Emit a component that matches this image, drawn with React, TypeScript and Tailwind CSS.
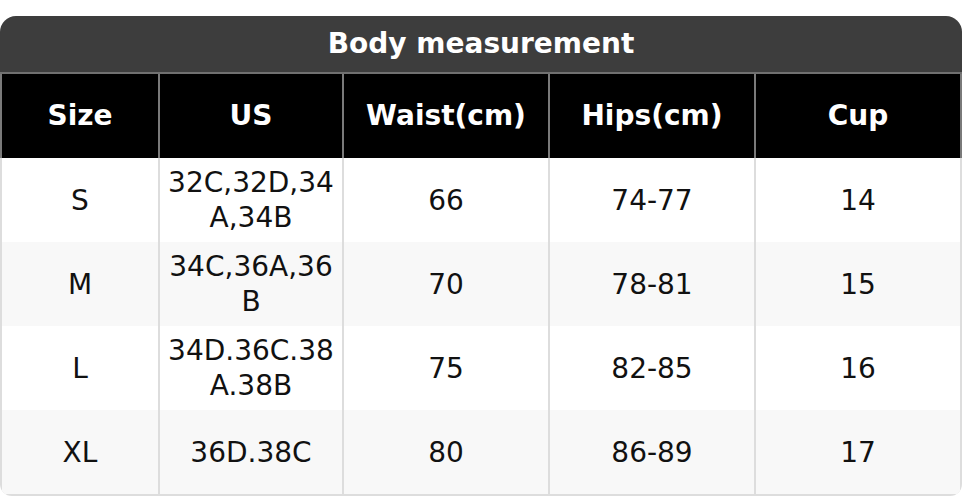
import React from "react";

type Row = { size: string; us: string; waist: string; hips: string; cup: string };

const rows: Row[] = [
  { size: "S", us: "32C,32D,34A,34B", waist: "66", hips: "74-77", cup: "14" },
  { size: "M", us: "34C,36A,36B", waist: "70", hips: "78-81", cup: "15" },
  { size: "L", us: "34D.36C.38A.38B", waist: "75", hips: "82-85", cup: "16" },
  { size: "XL", us: "36D.38C", waist: "80", hips: "86-89", cup: "17" },
];

const headers = ["Size", "US", "Waist(cm)", "Hips(cm)", "Cup"];

function App() {
  return (
    <div className="w-[962px] h-[496px] bg-white pt-4 font-['DejaVu_Sans',sans-serif]">
      {/* title bar */}
      <div className="h-[58px] rounded-t-[16px] bg-[#3d3d3d] border-b-2 border-[#707070] flex items-center justify-center text-[28px] font-bold text-white">
        Body measurement
      </div>

      {/* header row */}
      <div className="grid grid-cols-[156px_182px_204px_204px_204px] gap-x-[2px] px-[2px] bg-[#7a7a7a]">
        {headers.map((h) => (
          <div key={h} className="h-[84px] bg-black flex items-center justify-center text-[28px] font-bold text-white">
            {h}
          </div>
        ))}
      </div>

      {/* body rows */}
      <div className="rounded-b-[12px] overflow-hidden bg-[#dddddd] px-[2px] pb-[2px]">
        {rows.map((r, i) => (
          <div key={r.size} className="grid grid-cols-[156px_182px_204px_204px_204px] gap-x-[2px]">
            {[r.size, r.us, r.waist, r.hips, r.cup].map((v, j) => (
              <div
                key={j}
                className={`h-[84px] px-[6px] flex items-center justify-center text-center text-[28px] leading-[35px] text-[#111] break-all ${
                  i % 2 === 1 ? "bg-[#f8f8f8]" : "bg-white"
                }`}
              >
                {v}
              </div>
            ))}
          </div>
        ))}
      </div>
    </div>
  );
}

export default App;
